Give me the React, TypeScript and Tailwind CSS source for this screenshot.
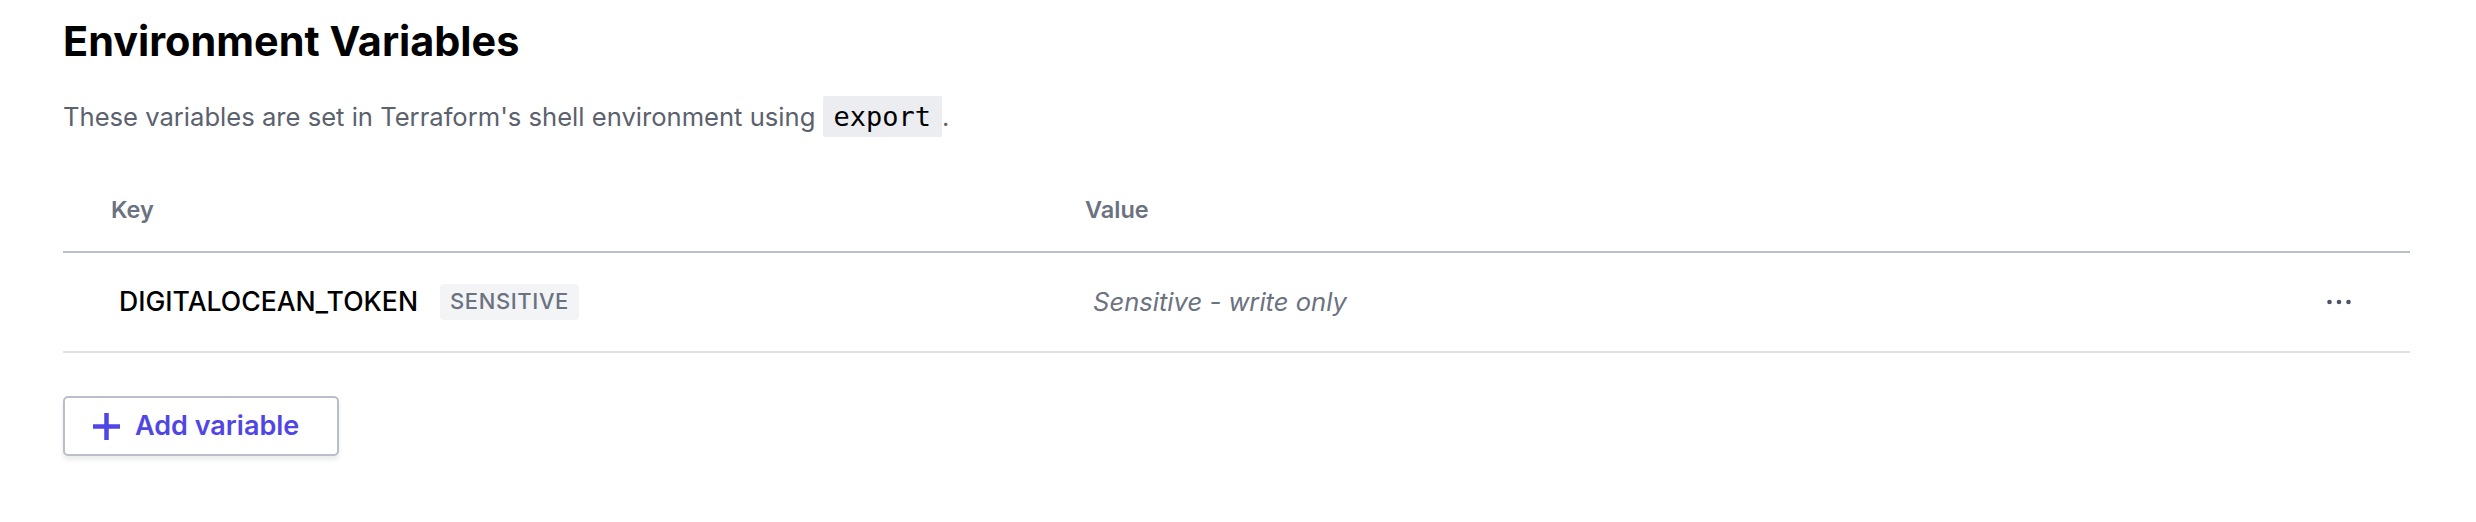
import React from 'react';

const PlusIcon = () => (
  <svg width="29" height="29" viewBox="0 0 29 29" fill="none">
    <path d="M14.5 1v27M1 14.5h27" stroke="currentColor" strokeWidth="4.5" />
  </svg>
);

const DotsIcon = () => (
  <svg width="24" height="6" viewBox="0 0 24 6" fill="#4b5563">
    <circle cx="2.5" cy="3" r="2.3" />
    <circle cx="12" cy="3" r="2.3" />
    <circle cx="21.5" cy="3" r="2.3" />
  </svg>
);

interface EnvVar {
  key: string;
  sensitive: boolean;
  value: string;
}

const vars: EnvVar[] = [{ key: 'DIGITALOCEAN_TOKEN', sensitive: true, value: '' }];

export default function App() {
  return (
    <div className="w-full h-[522px] bg-white pl-[63px] pr-[66px] pt-[17px] font-['Inter',sans-serif] text-black">
      <h1 className="text-[41.4px] leading-[48px] font-bold">Environment Variables</h1>
      <p className="mt-[34px] text-[25.6px] leading-[36px] text-[#5b616d]">
        These variables are set in Terraform's shell environment using{' '}
        <code className="bg-[#ecedf1] px-[11px] py-[5px] rounded-[2px] text-[27px] text-black font-['DejaVu_Sans_Mono',monospace]">
          export
        </code>
        .
      </p>

      <div className="mt-[34px]">
        <div className="flex h-[84px] items-center border-b-2 border-[#b9bec9] text-[23.5px] font-semibold text-[#6b7280]">
          <div className="w-[974px] pl-[48px]">Key</div>
          <div className="flex-1 pl-[48px]">Value</div>
        </div>
        {vars.map(v => (
          <div key={v.key} className="flex h-[100px] items-center border-b-2 border-[#dfe1e6]">
            <div className="w-[974px] pl-[56px] flex items-center gap-[22px]">
              <span className="text-[26.6px] font-medium">{v.key}</span>
              {v.sensitive && (
                <span className="h-[36px] flex items-center px-[10px] rounded-[4px] bg-[#f3f4f6] text-[22px] font-medium tracking-[0.6px] text-[#6b7280]">
                  SENSITIVE
                </span>
              )}
            </div>
            <div className="flex-1 pl-[56px] text-[25.6px] italic text-[#6b7280]">Sensitive - write only</div>
            <div className="pr-[59px]">
              <DotsIcon />
            </div>
          </div>
        ))}
      </div>

      <button className="mt-[43px] h-[60px] flex items-center gap-[14px] pl-[27px] pr-[38px] rounded-[5px] border-2 border-[#b9bec9] bg-white shadow-[0_4px_4px_rgba(0,0,0,0.08)] text-[#5046e5] text-[27px] font-semibold">
        <PlusIcon />
        Add variable
      </button>
    </div>
  );
}
